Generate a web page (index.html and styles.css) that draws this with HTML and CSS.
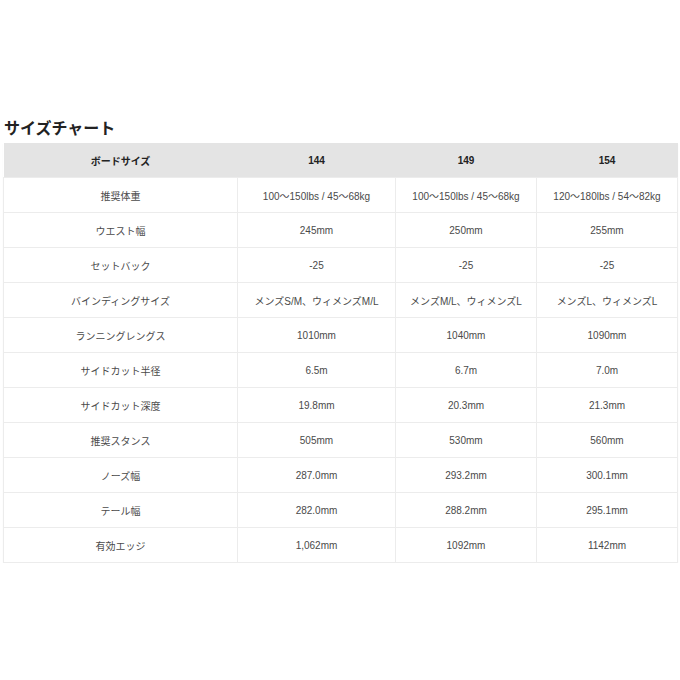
FILE: index.html
```html
<!DOCTYPE html>
<html lang="ja">
<head>
<meta charset="utf-8">
<link rel="stylesheet" href="styles.css">
</head>
<body>
<div class="page">
  <h2 class="title">サイズチャート</h2>
  <table class="chart">
    <colgroup>
      <col class="c1"><col class="c2"><col class="c3"><col class="c4">
    </colgroup>
    <thead>
      <tr><th>ボードサイズ</th><th>144</th><th>149</th><th>154</th></tr>
    </thead>
    <tbody>
      <tr><td>推奨体重</td><td>100〜150lbs / 45〜68kg</td><td>100〜150lbs / 45〜68kg</td><td>120〜180lbs / 54〜82kg</td></tr>
      <tr><td>ウエスト幅</td><td>245mm</td><td>250mm</td><td>255mm</td></tr>
      <tr><td>セットバック</td><td>-25</td><td>-25</td><td>-25</td></tr>
      <tr><td>バインディングサイズ</td><td>メンズS/M、ウィメンズM/L</td><td>メンズM/L、ウィメンズL</td><td>メンズL、ウィメンズL</td></tr>
      <tr><td>ランニングレングス</td><td>1010mm</td><td>1040mm</td><td>1090mm</td></tr>
      <tr><td>サイドカット半径</td><td>6.5m</td><td>6.7m</td><td>7.0m</td></tr>
      <tr><td>サイドカット深度</td><td>19.8mm</td><td>20.3mm</td><td>21.3mm</td></tr>
      <tr><td>推奨スタンス</td><td>505mm</td><td>530mm</td><td>560mm</td></tr>
      <tr><td>ノーズ幅</td><td>287.0mm</td><td>293.2mm</td><td>300.1mm</td></tr>
      <tr><td>テール幅</td><td>282.0mm</td><td>288.2mm</td><td>295.1mm</td></tr>
      <tr><td>有効エッジ</td><td>1,062mm</td><td>1092mm</td><td>1142mm</td></tr>
    </tbody>
  </table>
</div>
</body>
</html>
```
FILE: styles.css
```css
html, body {
  margin: 0;
  padding: 0;
  background: #fff;
}
.page {
  padding: 119px 3px 0 3px;
  font-family: "Liberation Sans", Arial, "Noto Sans CJK JP", sans-serif;
  color: #333;
}
.title {
  margin: 0 0 4px 1px;
  font-size: 16px;
  line-height: 20px;
  font-weight: bold;
  color: #222;
}
.chart {
  width: 674px;
  border-collapse: collapse;
  table-layout: fixed;
  font-size: 10px;
  box-shadow: 0 1px 1px rgba(0,0,0,0.06);
}
.c1 { width: 234px; }
.c2 { width: 158px; }
.c3 { width: 141px; }
.c4 { width: 141px; }
.chart th {
  height: 34px;
  padding: 0;
  background: #e4e4e4;
  font-weight: bold;
  color: #222;
  text-align: center;
}
.chart td {
  height: 34px;
  padding: 0;
  text-align: center;
  color: #4a4a4a;
  border: 1px solid #ececec;
}
```
